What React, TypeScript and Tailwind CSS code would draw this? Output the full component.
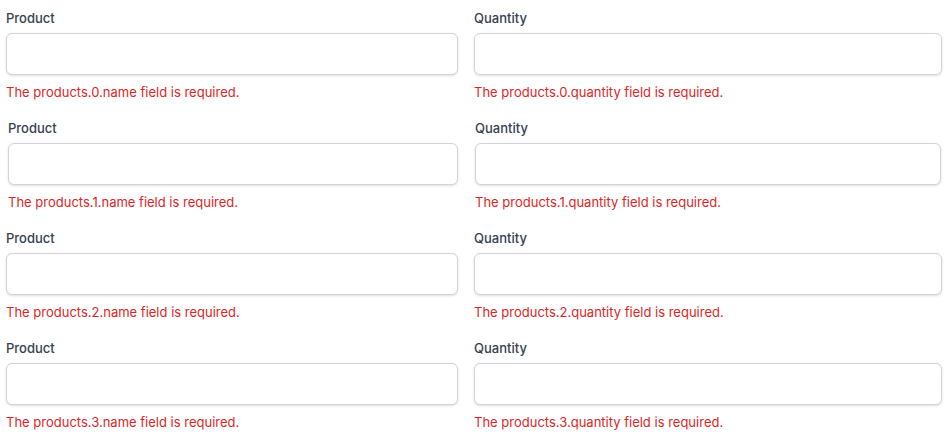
const rows = [0, 1, 2, 3];

function Field({ label, error }: { label: string; error: string }) {
  return (
    <div>
      <label className="block text-[13px] leading-5 font-[450] text-[#374151]">{label}</label>
      <input
        type="text"
        className="mt-[5px] block w-full h-[42px] rounded-md border border-[#d1d5db] bg-white shadow-sm"
      />
      <p className="mt-[7px] text-[13px] leading-5 text-[#dc2626]">{error}</p>
    </div>
  );
}

export default function App() {
  return (
    <div className="bg-white min-h-screen" style={{ fontFamily: 'Inter, sans-serif' }}>
      {rows.map((i) => (
        <div
          key={i}
          className={
            i === 1
              ? 'grid grid-cols-[1fr_466px] gap-[17px] pl-2 pr-[7px] pt-2 pb-2'
              : 'grid grid-cols-[1fr_468px] gap-4 px-1.5 pt-2 pb-2'
          }
        >
          <Field label="Product" error={`The products.${i}.name field is required.`} />
          <Field label="Quantity" error={`The products.${i}.quantity field is required.`} />
        </div>
      ))}
    </div>
  );
}
